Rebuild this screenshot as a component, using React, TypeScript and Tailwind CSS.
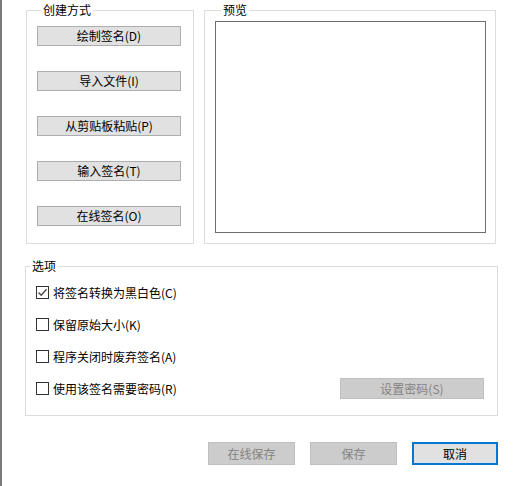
import React from "react";

const font = { fontFamily: '"Noto Sans CJK SC", "Noto Sans", sans-serif' };

function Btn({ label }: { label: string }) {
  return (
    <div className="w-[144px] h-[20px] bg-[#e1e1e1] border border-[#adadad] flex items-center justify-center text-[12px] leading-none text-black">
      {label}
    </div>
  );
}

function Check({ label, checked }: { label: string; checked?: boolean }) {
  return (
    <div className="flex items-center h-[21px]">
      <div className="w-[13px] h-[13px] border border-[#333] bg-white flex items-center justify-center ml-[10px]">
        {checked && (
          <svg width="11" height="11" viewBox="0 0 11 11">
            <path d="M1.5 5.5 L4.2 8.2 L9.5 2.2" fill="none" stroke="#444" strokeWidth="1.3" />
          </svg>
        )}
      </div>
      <span className="ml-[4px] text-[12px] leading-none text-black">{label}</span>
    </div>
  );
}

export default function App() {
  return (
    <div className="w-[532px] h-[486px] bg-white flex" style={font}>
      <div className="w-[2px] h-full bg-[#7a7a7a]" />
      <div className="flex flex-col pl-[23px] pt-[2px]">
        <div className="flex ml-[1px] gap-[10px]">
          <fieldset className="w-[168px] border border-[#dcdcdc] m-0 p-0 pl-[10px] pb-[16px]">
            <legend className="ml-[4px] px-[2px] text-[12px] leading-[16px] text-black">创建方式</legend>
            <div className="flex flex-col gap-[25px] mt-[8px]">
              <Btn label="绘制签名(D)" />
              <Btn label="导入文件(I)" />
              <Btn label="从剪贴板粘贴(P)" />
              <Btn label="输入签名(T)" />
              <Btn label="在线签名(O)" />
            </div>
          </fieldset>
          <fieldset className="w-[292px] border border-[#dcdcdc] m-0 p-0 pl-[10px] pb-[10px]">
            <legend className="ml-[6px] px-[2px] text-[12px] leading-[16px] text-black">预览</legend>
            <div className="mt-[3px] w-[271px] h-[212px] border border-[#6e6e6e] bg-white" />
          </fieldset>
        </div>
        <fieldset className="mt-[14px] w-[473px] border border-[#dcdcdc] m-0 p-0 pr-[13px] pb-[16px]">
          <legend className="ml-[4px] px-[2px] text-[12px] leading-[16px] text-black">选项</legend>
          <div className="flex flex-col gap-[11px] mt-[8px]">
            <Check label="将签名转换为黑白色(C)" checked />
            <Check label="保留原始大小(K)" />
            <Check label="程序关闭时废弃签名(A)" />
            <div className="flex items-center justify-between">
              <Check label="使用该签名需要密码(R)" />
              <div className="w-[144px] h-[21px] bg-[#cccccc] border border-[#bfbfbf] flex items-center justify-center text-[12px] leading-none text-[#838383]">
                设置密码(S)
              </div>
            </div>
          </div>
        </fieldset>
        <div className="flex justify-end gap-[15px] mt-[26px] w-[473px]">
          <div className="w-[87px] h-[23px] bg-[#cccccc] border border-[#bfbfbf] flex items-center justify-center text-[12px] leading-none text-[#838383]">
            在线保存
          </div>
          <div className="w-[87px] h-[23px] bg-[#cccccc] border border-[#bfbfbf] flex items-center justify-center text-[12px] leading-none text-[#838383]">
            保存
          </div>
          <div className="w-[86px] h-[23px] bg-[#e1e1e1] border-2 border-[#0078d7] flex items-center justify-center text-[12px] leading-none text-black">
            取消
          </div>
        </div>
      </div>
    </div>
  );
}
